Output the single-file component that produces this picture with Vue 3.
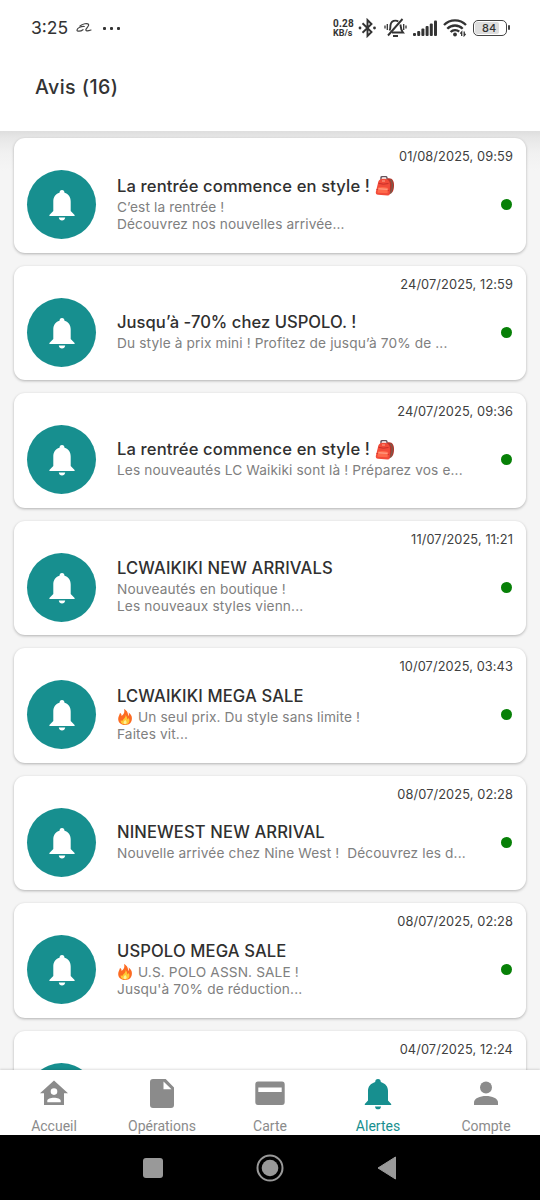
<script setup>
const notices = [
  { date: '01/08/2025, 09:59', title: 'La rentrée commence en style !', bag: true, lines: ['C’est la rentrée !', 'Découvrez nos nouvelles arrivée...'] },
  { date: '24/07/2025, 12:59', title: 'Jusqu’à -70% chez USPOLO. !', tight: true, lines: ['Du style à prix mini ! Profitez de jusqu’à 70% de ...'] },
  { date: '24/07/2025, 09:36', title: 'La rentrée commence en style !', bag: true, lines: ['Les nouveautés LC Waikiki sont là ! Préparez vos e...'] },
  { date: '11/07/2025, 11:21', title: 'LCWAIKIKI NEW ARRIVALS', lines: ['Nouveautés en boutique !', 'Les nouveaux styles vienn...'] },
  { date: '10/07/2025, 03:43', title: 'LCWAIKIKI MEGA SALE', fire: true, lines: ['Un seul prix. Du style sans limite !', 'Faites vit...'] },
  { date: '08/07/2025, 02:28', title: 'NINEWEST NEW ARRIVAL', lines: ['Nouvelle arrivée chez Nine West !  Découvrez les d...'] },
  { date: '08/07/2025, 02:28', title: 'USPOLO MEGA SALE', fire: true, lines: ['U.S. POLO ASSN. SALE !', "Jusqu'à 70% de réduction..."] },
  { date: '04/07/2025, 12:24', title: '', lines: [] },
]
const tabs = [
  { name: 'home', label: 'Accueil' },
  { name: 'file', label: 'Opérations' },
  { name: 'card', label: 'Carte' },
  { name: 'bell', label: 'Alertes' },
  { name: 'user', label: 'Compte' },
]
</script>

<template>
  <div class="screen">
    <header class="header">
      <div class="status">
        <span class="time">3:25</span>
        <svg class="swirl" width="17" height="12" viewBox="0 0 17 12" fill="none" stroke="#444" stroke-linecap="round">
          <path d="M4 4C6.500 1.600 11.500 .9 12.600 2.300C13.500 3.800 10.800 5.500 9.900 7.500C9.400 9.200 11.500 9.200 15 8" stroke-width="1.200" />
          <path d="M8.300 4.500C5.500 4 1.300 5.800 1 8C.9 9.800 4.500 9.500 7 7.700" stroke-width="1.200" />
        </svg>
        <span class="dots"><i></i><i></i><i></i></span>
        <span class="rate"><span>0.28</span><span>KB/s</span></span>
        <svg class="bt" width="19" height="20" viewBox="0 0 19 20" fill="none" stroke="#333" stroke-width="1.900">
          <path d="M4.500 5.300L13.500 14L9.500 18V2L13.500 6L4.500 14.700" />
          <circle cx="2" cy="10" r="1.400" fill="#333" stroke="none" /><circle cx="16.500" cy="10" r="1.400" fill="#333" stroke="none" />
        </svg>
        <svg class="mute" width="23" height="20" viewBox="0 0 23 20" fill="none" stroke="#333" stroke-width="1.900">
          <path d="M5.500 12.500C6.700 11 6.200 9 6.500 7C7 4 9 2.600 11.500 2.600C12.700 2.600 13.500 2.900 14.300 3.500M16.500 6.500C16.800 9 16.500 11.500 19 14.500H8" />
          <path d="M18.500 1L4 17.500M9 18H14" />
          <path d="M3.300 6V12M1 7.500V10.500M19.700 6V12M22 7.500V10.500" stroke-width="1.300" />
        </svg>
        <svg class="signal" width="25" height="17" viewBox="0 0 25 17" fill="#333">
          <rect x="0" y="13" width="3" height="3" rx="1" /><rect x="4.200" y="11" width="3" height="5" rx="1" /><rect x="8.400" y="8.500" width="3" height="7.500" rx="1" /><rect x="12.600" y="6" width="3" height="10" rx="1" /><rect x="16.800" y="3.500" width="3" height="12.500" rx="1" /><rect x="21" y="0.500" width="3" height="15.500" rx="1" />
        </svg>
        <svg class="wifi" width="24" height="18" viewBox="0 0 24 18" fill="none" stroke="#333" stroke-width="2.300">
          <path d="M1 6C7-.1 17-.1 23 6M4.300 9.700C8.500 5.400 15.500 5.400 19.700 9.700M7.600 13C10 10.600 14 10.600 16.200 12.700" />
          <circle cx="12" cy="15.500" r="1.900" fill="#333" stroke="none" />
          <path d="M18.700 17V13L17.300 14.700M21.200 12.500V16.500L22.600 14.800" stroke-width="1.300" />
        </svg>
        <span class="battery"><span class="level">84</span></span>
      </div>
      <h1>Avis (16)</h1>
    </header>

    <main class="list">
      <article v-for="(n, i) in notices" :key="i" class="card">
        <time>{{ n.date }}</time>
        <div class="row">
          <div class="avatar">
            <svg width="26" height="31" viewBox="0 0 26 31" fill="#fff">
              <path d="M13 0C14.600 0 15.500 1.200 15.500 2.800C19.700 4 21.700 7.200 21.700 11.500V21L25.600 25V26H.4V25L4.300 21V11.500C4.300 7.200 6.300 4 10.500 2.800C10.500 1.200 11.400 0 13 0Z" />
              <path d="M9.800 27.500H16.200C16 29.500 14.700 30.500 13 30.500S10 29.500 9.800 27.500Z" />
            </svg>
          </div>
          <div class="copy">
            <h2 :class="{ tight: n.tight }">{{ n.title }}
              <svg v-if="n.bag" class="bag" width="20" height="20" viewBox="0 0 20 20">
                <path d="M6 4V1.700Q6 .6 7.500.6H10.500Q12 .6 12 2V4" fill="none" stroke="#65515a" stroke-width="1.400" />
                <path d="M12 2.500C17 1 19.500 5 19 10C18.800 14 18 17 14 18.500Z" fill="#b8342b" />
                <path d="M15.500 3.800C18 6 17.500 12 15.500 17.500" fill="none" stroke="#706250" stroke-width="1.200" />
                <path d="M3 7C3.500 3.500 6 2.600 9 2.800C13 2.700 15 5 15 9L14.700 18Q14.600 19.500 12.500 19.500L3 18.800Q.5 18.500.8 16Z" fill="#f24b39" />
                <path d="M3.500 7.300Q8 9 13.500 7.500M1.500 13.500L13.700 14.500" fill="none" stroke="#c92f29" />
                <path d="M3 11.500Q8 10.500 13 12L12.500 17.300L2.500 16.700Z" fill="#ff6a4b" />
                <path d="M3.500 12.800L12.500 13.300M7 5H10" stroke="#ffb199" stroke-width=".9" />
              </svg>
            </h2>
            <p v-for="(line, j) in n.lines" :key="j">
              <svg v-if="n.fire && j === 0" class="fire" width="16" height="16" viewBox="0 0 16 16">
                <path d="M7 0C11 2 11 5 11.300 7C12 6 12 4.500 11.600 3.500C15 6 15.500 9 14.500 12C13.500 15 10.500 16 8 16C4 16 1.200 13.500 1.200 10C1.200 7 2.700 5.800 3 3.900C4.300 4.500 4.700 5.700 4.600 7C7 5 8 3 7 0Z" fill="#fc6b22" />
                <path d="M8.500 6C10.500 8 10 9.500 10.500 10.500L11.700 9C14 13.500 10.500 15.500 8 15.500C5 15.500 3.200 13.500 3.800 11.300L5.200 12C6.500 9.500 9 9 8.500 6Z" fill="#ffc934" />
                <path d="M8.200 11C10.500 13 9.700 15 8 15S5.800 13.300 8.200 11Z" fill="#fff09a" />
              </svg>{{ line }}
            </p>
          </div>
          <span class="unread"></span>
        </div>
      </article>
    </main>

    <nav class="tabs">
      <div v-for="t in tabs" :key="t.name" class="tab" :class="{ active: t.name === 'bell' }">
        <svg width="30" height="32" viewBox="0 0 30 32" fill="currentColor">
          <template v-if="t.name === 'home'">
            <path fill-rule="evenodd" d="M15 2.500L29 15.300H25V27H5V15.300H1ZM15 10.300A3.300 3.300 0 1 0 15 16.900A3.300 3.300 0 1 0 15 10.300ZM8.300 24.300H21.700V22.800C21.700 18.800 8.300 18.800 8.300 22.800Z" />
          </template>
          <path v-else-if="t.name === 'file'" fill-rule="evenodd" d="M6 1H18.700L27 9.500V27Q27 30 24 30H6Q3 30 3 27V4Q3 1 6 1ZM16.500 3.500V11.300H24.500Z" />
          <path v-else-if="t.name === 'card'" fill-rule="evenodd" d="M3 3.500H27Q29.700 3.500 29.700 6.500V24Q29.700 27 27 27H3Q.3 27 .3 24V6.500Q.3 3.500 3 3.500ZM3.300 9.500V14H26.700V9.500Z" />
          <template v-else-if="t.name === 'bell'">
            <path d="M15 1C16.800 1 17.800 2.200 17.800 4C22.500 5.500 25 8.500 25 13V22.500L28.200 26V27H1.800V26L5 22.500V13C5 8.500 7.500 5.500 12.200 4C12.200 2.200 13.200 1 15 1Z" />
            <path d="M12 28.400H18C17.800 30.400 16.700 31.300 15 31.300S12.200 30.400 12 28.400Z" />
          </template>
          <template v-else>
            <circle cx="15" cy="9.500" r="6" />
            <path d="M3 27V24.500C3 15.800 27 15.800 27 24.500V27Z" />
          </template>
        </svg>
        <span>{{ t.label }}</span>
      </div>
    </nav>
    <footer class="system">
      <svg width="20" height="20" viewBox="0 0 20 20"><rect width="20" height="20" rx="3" fill="#999" /></svg>
      <svg width="28" height="28" viewBox="0 0 28 28"><circle cx="14" cy="14" r="12.500" fill="none" stroke="#999" stroke-width="2" /><circle cx="14" cy="14" r="8.300" fill="#999" /></svg>
      <svg width="20" height="24" viewBox="0 0 20 24"><path d="M1 12L18.500 1V23Z" fill="#999" stroke="#999" stroke-linejoin="round" /></svg>
    </footer>
  </div>
</template>

<style>
body { margin: 0; }
</style>

<style scoped>
.screen { width: 540px; height: 1200px; display: flex; flex-direction: column; overflow: hidden; background: #f5f5f5; font-family: Inter, "Noto Sans", sans-serif; color: #333; }
.header { position: relative; z-index: 1; height: 131px; flex: none; background: #fff; }
.status { height: 56px; display: flex; align-items: center; padding: 0 33px 0 31px; box-sizing: border-box; }
.time { font-size: 17.500px; line-height: 22px; width: 45px; white-space: nowrap; }
.dots { display: flex; gap: 4px; margin-left: 10px; }
.dots i { width: 3px; height: 3px; border-radius: 1px; background: #333; }
.rate { display: flex; flex-direction: column; margin-left: auto; padding-top: 1px; font-family: Roboto, sans-serif; font-weight: 700; font-size: 9px; line-height: 9.500px; width: 21px; white-space: nowrap; }
.rate span:first-child { font-size: 10px; letter-spacing: .2px; }
.bt { margin-left: 4px; }
.mute { margin-left: 7px; }
.signal { margin-left: 6px; }
.wifi { margin-left: 5px; }
.battery { position: relative; width: 34px; height: 16px; margin-left: 6px; box-sizing: border-box; border: 1.500px solid #444; border-radius: 5px; padding: 1px; }
.battery::after { content: ""; position: absolute; right: -4px; top: 4px; width: 2px; height: 5px; background: #444; border-radius: 1px; }
.level { display: block; width: 24px; height: 12px; box-sizing: border-box; padding-left: 7px; background: #ddd; border-radius: 2px; font-size: 11px; line-height: 12px; font-weight: 500; }
h1 { margin: 18px 0 0 35px; font-size: 19.600px; line-height: 26px; font-weight: 500; letter-spacing: .45px; }
.list { flex: 1; min-height: 0; overflow: hidden; padding: 7px 14px 0; display: flex; flex-direction: column; gap: 13px; background: linear-gradient(#dedede, #e7e7e7 7px, #f1f1f1 22px, #f5f5f5 40px); }
.card { flex: none; height: 114.500px; box-sizing: border-box; padding: 10px 14px 0 13px; background: #fff; border-radius: 11px; box-shadow: 0 1px 3px rgba(0, 0, 0, .28); }
time { display: block; text-align: right; margin-right: -1px; font-size: 12.800px; letter-spacing: .1px; line-height: 17px; height: 17px; color: #404040; }
.row { display: flex; align-items: center; height: 79px; }
.avatar { flex: none; width: 69px; height: 69px; border-radius: 50%; background: #178f8f; display: flex; align-items: center; justify-content: center; }
.avatar svg { margin-top: 2px; }
.copy { flex: 1; margin: 0 0 2px 21px; white-space: pre; }
h2 { display: flex; align-items: center; gap: 5px; height: 23px; padding-bottom: 1px; margin: 0; font-size: 16.600px; line-height: 23px; font-weight: 500; letter-spacing: .12px; white-space: nowrap; color: #303030; }
h2.tight { letter-spacing: .02px; }
p { display: flex; align-items: center; gap: 5px; height: 17px; margin: 0; font-size: 13.700px; letter-spacing: .12px; line-height: 17px; color: #808080; white-space: pre; }
.bag, .fire { flex: none; }
.unread { flex: none; width: 11px; height: 11px; border-radius: 50%; background: #078007; }
.tabs { position: relative; z-index: 3; flex: none; height: 65px; display: grid; grid-template-columns: repeat(5, 1fr); background: #fff; box-shadow: 0 -1px 2px rgba(0, 0, 0, .13); }
.tab { display: flex; flex-direction: column; align-items: center; padding-top: 8px; color: #8b8b8b; font-family: Roboto, sans-serif; font-size: 14px; line-height: 17px; }
.tab span { margin-top: 8px; letter-spacing: 0; }
.tab.active { color: #178f8f; }
.system { flex: none; height: 65px; background: #000; display: flex; align-items: center; justify-content: center; gap: 93px; position: relative; z-index: 4; }
</style>
